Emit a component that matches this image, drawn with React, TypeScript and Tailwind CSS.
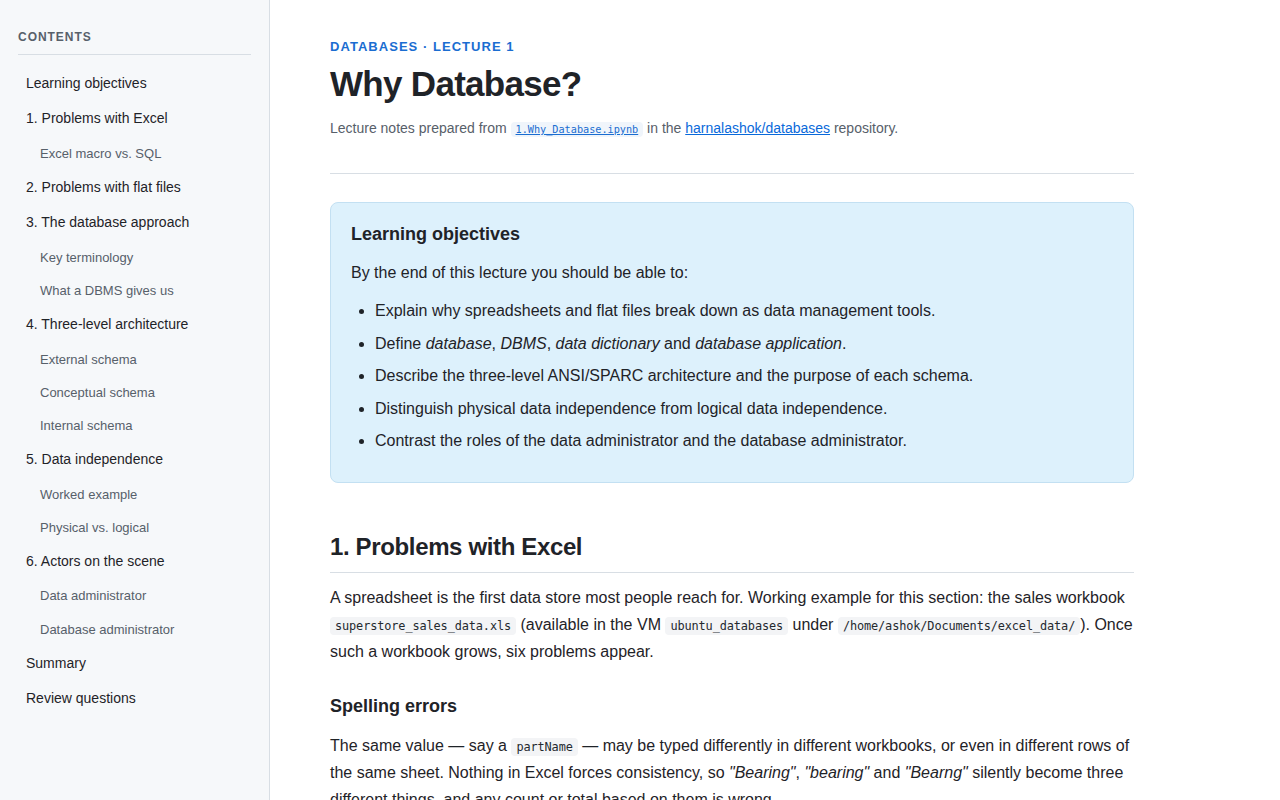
import React from 'react';

type TocItem = { label: string; sub?: boolean };

const toc: TocItem[] = [
  { label: 'Learning objectives' },
  { label: '1. Problems with Excel' },
  { label: 'Excel macro vs. SQL', sub: true },
  { label: '2. Problems with flat files' },
  { label: '3. The database approach' },
  { label: 'Key terminology', sub: true },
  { label: 'What a DBMS gives us', sub: true },
  { label: '4. Three-level architecture' },
  { label: 'External schema', sub: true },
  { label: 'Conceptual schema', sub: true },
  { label: 'Internal schema', sub: true },
  { label: '5. Data independence' },
  { label: 'Worked example', sub: true },
  { label: 'Physical vs. logical', sub: true },
  { label: '6. Actors on the scene' },
  { label: 'Data administrator', sub: true },
  { label: 'Database administrator', sub: true },
  { label: 'Summary' },
  { label: 'Review questions' },
];

const mono = "font-['DejaVu_Sans_Mono','Liberation_Mono',monospace]";

const Code: React.FC<{ children: React.ReactNode }> = ({ children }) => (
  <code className={`${mono} text-[11.9px] bg-[#f3f4f6] text-[#24292f] rounded px-[5px] py-[2px] tracking-[-0.01em]`}>
    {children}
  </code>
);

const App: React.FC = () => {
  return (
    <div className="flex min-h-screen bg-white font-['Liberation_Sans',Arial,sans-serif] text-[#1f2328]">
      {/* Sidebar */}
      <aside className="w-[270px] shrink-0 bg-[#f6f8fa] border-r border-[#d8dee4] px-[18px] pt-[29px] h-screen overflow-hidden">
        <div className="text-[12px] leading-4 font-bold tracking-[0.08em] text-[#57606a] pb-[9px] border-b border-[#d8dee4]">
          CONTENTS
        </div>
        <nav className="mt-[11px]">
          {toc.map((item) =>
            item.sub ? (
              <div key={item.label} className="pl-[22px] py-2 text-[13px] leading-[17.2px] text-[#57606a]">
                {item.label}
              </div>
            ) : (
              <div key={item.label} className="pl-2 py-2 text-[14px] leading-[19.4px] text-[#1f2328]">
                {item.label}
              </div>
            )
          )}
        </nav>
      </aside>

      {/* Main */}
      <main className="flex-1 pl-[60px] pt-[38px] h-screen overflow-hidden">
        <div className="w-[804px]">
          <div className="text-[13px] leading-[18px] font-bold tracking-[0.08em] text-[#1a6dd1]">
            DATABASES · LECTURE 1
          </div>
          <h1 className="text-[35px] leading-[44px] font-bold mt-[6px] tracking-[-0.02em] text-[#1f2328]">Why Database?</h1>
          <p className="mt-[11px] text-[14px] leading-[22px] text-[#57606a]">
            Lecture notes prepared from{' '}
            <code className={`${mono} text-[10.2px] bg-[#f0f5fb] text-[#1a6dd1] underline rounded px-[5px] py-[2px]`}>
              1.Why_Database.ipynb
            </code>{' '}
            in the <span className="text-[#0969da] underline">harnalashok/databases</span> repository.
          </p>

          <hr className="mt-[32px] border-t border-[#d8dee4]" />

          <section className="mt-[28px] bg-[#ddf1fc] border border-[#c3e0f2] rounded-lg px-5 pt-[18px] pb-[28px]">
            <h3 className="text-[18px] leading-[26px] font-bold text-[#1f2328]">Learning objectives</h3>
            <p className="mt-[13px] text-[16px] leading-[26px]">By the end of this lecture you should be able to:</p>
            <ul className="mt-[12px] list-disc pl-6 text-[16px] leading-[26px] space-y-[6.5px]">
              <li>Explain why spreadsheets and flat files break down as data management tools.</li>
              <li>
                Define <em>database</em>, <em>DBMS</em>, <em>data dictionary</em> and <em>database application</em>.
              </li>
              <li>Describe the three-level ANSI/SPARC architecture and the purpose of each schema.</li>
              <li>Distinguish physical data independence from logical data independence.</li>
              <li>Contrast the roles of the data administrator and the database administrator.</li>
            </ul>
          </section>

          <h2 className="mt-[48px] text-[24px] leading-[32px] font-bold tracking-[-0.015em] pb-[9px] border-b border-[#d8dee4]">
            1. Problems with Excel
          </h2>
          <p className="mt-[12px] text-[16px] leading-[26.5px]">
            A spreadsheet is the first data store most people reach for. Working example for this section: the sales workbook{' '}
            <Code>superstore_sales_data.xls</Code> (available in the VM <Code>ubuntu_databases</Code> under{' '}
            <Code>/home/ashok/Documents/excel_data/</Code>). Once such a workbook grows, six problems appear.
          </p>

          <h3 className="mt-[27px] text-[18px] leading-[26px] font-bold">Spelling errors</h3>
          <p className="mt-[14px] text-[16px] leading-[26.5px]">
            The same value — say a <Code>partName</Code> — may be typed differently in different workbooks, or even in different rows of
            the same sheet. Nothing in Excel forces consistency, so <em>"Bearing"</em>, <em>"bearing"</em> and <em>"Bearng"</em> silently
            become three different things, and any count or total based on them is wrong.
          </p>
        </div>
      </main>
    </div>
  );
};

export default App;
